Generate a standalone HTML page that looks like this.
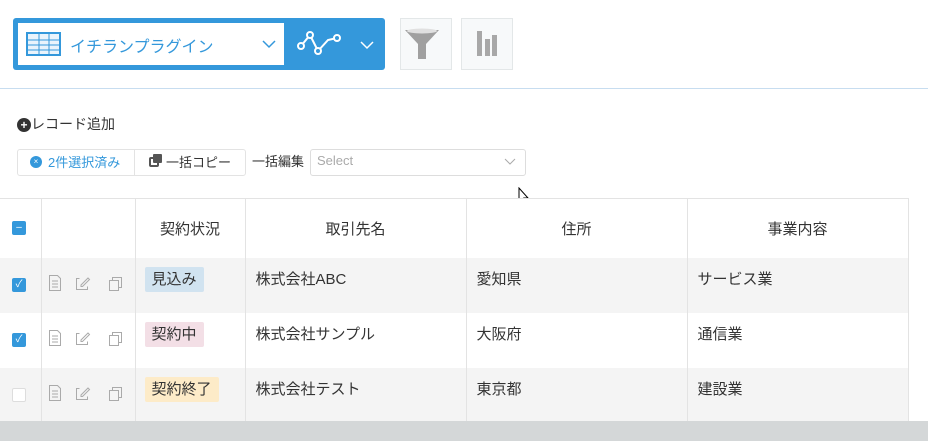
<!DOCTYPE html><html><head><meta charset="utf-8"><style>
*{margin:0;padding:0;box-sizing:border-box}
body{width:928px;height:441px;overflow:hidden;background:#fff;font-family:"Liberation Sans","Noto Sans CJK JP",sans-serif;color:#333;position:relative}
.a{position:absolute}
table{position:absolute;left:0;top:198px;border-collapse:collapse;font-size:15px}
td{border-left:1px solid #e3e3e3;vertical-align:top;padding:0}
tr.h td{height:59px;text-align:center;vertical-align:middle;background:#fff;border-top:1px solid #e3e3e3}
tr.r td{height:55px}
tr.g td{background:#f4f4f4}
.cb{width:14px;height:14px;border-radius:2px;margin:20px 0 0 12px;background:#3498db;color:#fff;font-size:10px;text-align:center;line-height:14px}
.tag{display:inline-block;margin:9px 0 0 9px;padding:0 7px;height:25px;line-height:25px;border-radius:2px}
.tx{padding:10px 0 0 10px}
.ic{margin:17px 0 0 6px}
</style></head><body>
<div class="a" style="left:13px;top:18px;width:372px;height:52px;background:#3498db;border-radius:3px"></div>
<div class="a" style="left:18px;top:23px;width:266px;height:42px;background:#fff"></div>
<svg class="a" style="left:26px;top:32px" width="35" height="24"><rect x="1" y="1" width="33" height="22" fill="#eaf4fc" stroke="#3498db" stroke-width="2"/><g stroke="#3498db" stroke-width="1"><line x1="2" y1="8" x2="33" y2="8"/><line x1="2" y1="13" x2="33" y2="13"/><line x1="2" y1="18" x2="33" y2="18"/><line x1="13" y1="2" x2="13" y2="22"/><line x1="23" y1="2" x2="23" y2="22"/></g></svg>
<div class="a" style="left:70px;top:33px;font-size:16px;color:#3498db">イチランプラグイン</div>
<svg class="a" style="left:262px;top:40px" width="14" height="9"><path d="M1 1l6 6 6-6" fill="none" stroke="#3498db" stroke-width="1.5"/></svg>
<svg class="a" style="left:296px;top:30px" width="48" height="28"><path d="M5 16L14 5L22 21L32 10L41 8" fill="none" stroke="#fff" stroke-width="2"/><g fill="#3498db" stroke="#fff" stroke-width="2"><circle cx="5" cy="16" r="3"/><circle cx="14" cy="5" r="3"/><circle cx="22" cy="21" r="3"/><circle cx="41" cy="8" r="3"/></g></svg>
<svg class="a" style="left:360px;top:41px" width="14" height="9"><path d="M1 1l6 6 6-6" fill="none" stroke="#fff" stroke-width="1.5"/></svg>
<div class="a" style="left:400px;top:18px;width:52px;height:52px;background:#f7f9fa;border:1px solid #e3e7e8"></div>
<svg class="a" style="left:404px;top:27px" width="44" height="34"><path d="M1 3h34l-13 14v15h-8v-15z" fill="#a0a0a0"/><ellipse cx="18" cy="4" rx="15" ry="2.5" fill="#e0e0e0"/></svg>
<div class="a" style="left:461px;top:18px;width:52px;height:52px;background:#f7f9fa;border:1px solid #e3e7e8"></div>
<div class="a" style="left:477px;top:31px;width:5px;height:25px;background:#a8a8a8"></div>
<div class="a" style="left:485px;top:39px;width:5px;height:17px;background:#a8a8a8"></div>
<div class="a" style="left:492px;top:35px;width:5px;height:21px;background:#a8a8a8"></div>
<div class="a" style="left:0;top:88px;width:928px;height:1px;background:#c7ddf0"></div>
<div class="a" style="left:17px;top:118px;width:14px;height:14px;border-radius:50%;background:#333;color:#fff;font-size:12px;line-height:14px;text-align:center;font-weight:bold">+</div>
<div class="a" style="left:31px;top:114px;font-size:14px">レコード追加</div>
<div class="a" style="left:17px;top:149px;width:229px;height:27px;border:1px solid #e3e3e3;border-radius:3px"></div>
<div class="a" style="left:134px;top:149px;width:1px;height:27px;background:#e3e3e3"></div>
<div class="a" style="left:30px;top:156px;width:12px;height:12px;border-radius:50%;background:#3498db;color:#fff;font-size:8px;line-height:12px;text-align:center">×</div>
<div class="a" style="left:48px;top:152px;font-size:13px;color:#3498db">2件選択済み</div>
<div class="a" style="left:149px;top:157px;width:10px;height:10px;border:2px solid #555;border-radius:2px"></div>
<div class="a" style="left:153px;top:154px;width:9px;height:9px;background:#555;border-radius:1px"></div>
<div class="a" style="left:166px;top:152px;font-size:13px">一括コピー</div>
<div class="a" style="left:252px;top:151px;font-size:13px">一括編集</div>
<div class="a" style="left:310px;top:149px;width:216px;height:27px;border:1px solid #ddd;border-radius:3px"></div>
<div class="a" style="left:317px;top:153px;font-size:13px;color:#aaa">Select</div>
<svg class="a" style="left:504px;top:158px" width="12" height="8"><path d="M1 1l5 5 5-5" fill="none" stroke="#aaa"/></svg>
<svg class="a" style="left:518px;top:187px" width="12" height="18"><path d="M1 1v14l3-3 3 5 2-1-3-5h4z" fill="#fff" stroke="#000"/></svg>
<table>
<tr class="h"><td style="width:41px;border-left:none;text-align:left"><div class="cb" style="margin-top:0">–</div></td><td style="width:94px"></td><td style="width:110px">契約状況</td><td style="width:221px">取引先名</td><td style="width:221px">住所</td><td style="width:221px;border-right:1px solid #e3e3e3">事業内容</td></tr>
<tr class="r g"><td style="border-left:none"><div class="cb">✓</div></td><td><svg class="ic" width="80" height="16"><g fill="none" stroke="#aaa" stroke-width="1"><path d="M1.5 .5h8l3 3v12h-11z M4 6h6M4 9h6M4 12h6"/><path d="M31.5 3.5h-3v11h11v-3M33 10l7-7 1.5 1.5-7 7h-1.5z"/><path d="M61.5 5.5h9v10h-9z M64.5 5.5v-3h9v10h-3"/></g></svg></td><td><span class="tag" style="background:#d1e3f0">見込み</span></td><td><div class="tx">株式会社ABC</div></td><td><div class="tx">愛知県</div></td><td style="border-right:1px solid #e3e3e3"><div class="tx">サービス業</div></td></tr>
<tr class="r"><td style="border-left:none"><div class="cb">✓</div></td><td><svg class="ic" width="80" height="16"><g fill="none" stroke="#aaa" stroke-width="1"><path d="M1.5 .5h8l3 3v12h-11z M4 6h6M4 9h6M4 12h6"/><path d="M31.5 3.5h-3v11h11v-3M33 10l7-7 1.5 1.5-7 7h-1.5z"/><path d="M61.5 5.5h9v10h-9z M64.5 5.5v-3h9v10h-3"/></g></svg></td><td><span class="tag" style="background:#f3dfe6">契約中</span></td><td><div class="tx">株式会社サンプル</div></td><td><div class="tx">大阪府</div></td><td style="border-right:1px solid #e3e3e3"><div class="tx">通信業</div></td></tr>
<tr class="r g"><td style="border-left:none"><div class="cb" style="background:#fff;border:1px solid #ddd"></div></td><td><svg class="ic" width="80" height="16"><g fill="none" stroke="#aaa" stroke-width="1"><path d="M1.5 .5h8l3 3v12h-11z M4 6h6M4 9h6M4 12h6"/><path d="M31.5 3.5h-3v11h11v-3M33 10l7-7 1.5 1.5-7 7h-1.5z"/><path d="M61.5 5.5h9v10h-9z M64.5 5.5v-3h9v10h-3"/></g></svg></td><td><span class="tag" style="background:#fdebc8">契約終了</span></td><td><div class="tx">株式会社テスト</div></td><td><div class="tx">東京都</div></td><td style="border-right:1px solid #e3e3e3"><div class="tx">建設業</div></td></tr>
</table>
<div class="a" style="left:0;top:421px;width:928px;height:20px;background:#d4d7d8"></div>
</body></html>
